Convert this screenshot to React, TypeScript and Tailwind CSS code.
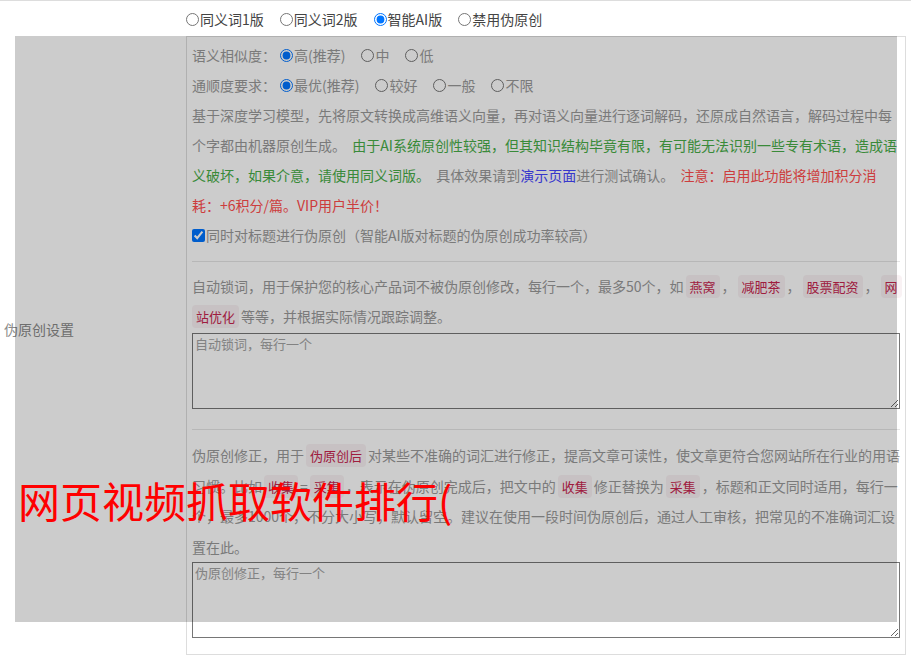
import React from "react";

const Tag = ({ children, first }: { children: React.ReactNode; first?: boolean }) => (
  <span
    className={
      first
        ? "mr-[2px] rounded-[4px] bg-[#f9f2f4] px-[4px] py-[2px] text-[13px] leading-none text-[#c7254e]"
        : "mx-[2px] rounded-[4px] bg-[#f9f2f4] px-[4px] py-[2px] text-[13px] leading-none text-[#c7254e]"
    }
  >
    {children}
  </span>
);

const Radio = ({ checked, label, name }: { checked?: boolean; label: string; name: string }) => (
  <label className="mr-[16px] inline-flex items-center">
    <input type="radio" name={name} defaultChecked={checked} className="m-0 mr-[1px] h-[13px] w-[13px]" />
    <span>{label}</span>
  </label>
);

export default function App() {
  return (
    <div
      className="relative h-[658px] w-[911px] overflow-hidden bg-white text-[14px]"
      style={{ fontFamily: '"Noto Sans CJK SC", "Noto Sans", sans-serif' }}
    >
      <div className="border-t border-[#dddddd]">
        {/* row 1 */}
        <div className="flex h-[35px]">
          <div className="w-[186px]" />
          <div className="flex items-center pt-[1px] text-[#444]">
            <Radio name="ver" label="同义词1版" />
            <Radio name="ver" label="同义词2版" />
            <Radio name="ver" label="智能AI版" checked />
            <Radio name="ver" label="禁用伪原创" />
          </div>
        </div>
        {/* row 2 */}
        <div className="flex">
          <div className="w-[186px] pl-[4px] pt-[283px] leading-[20px] text-[#8a8a8a]">伪原创设置</div>
          <div className="w-[720px] border border-[#dddddd] px-[5px] pb-[16px] pt-[3px] text-[#999]">
            <div className="flex h-[30px] items-center">
              <span className="mr-[4px]">语义相似度：</span>
              <Radio name="sim" label="高(推荐)" checked />
              <Radio name="sim" label="中" />
              <Radio name="sim" label="低" />
            </div>
            <div className="flex h-[30px] items-center">
              <span className="mr-[4px]">通顺度要求：</span>
              <Radio name="flu" label="最优(推荐)" checked />
              <Radio name="flu" label="较好" />
              <Radio name="flu" label="一般" />
              <Radio name="flu" label="不限" />
            </div>
            <p className="whitespace-nowrap leading-[30px]">
              基于深度学习模型，先将原文转换成高维语义向量，再对语义向量进行逐词解码，还原成自然语言，解码过程中每
              <br />
              个字都由机器原创生成。&nbsp;&nbsp;
              <span className="text-[#48ad48]">由于AI系统原创性较强，但其知识结构毕竟有限，有可能无法识别一些专有术语，造成语</span>
              <br />
              <span className="text-[#48ad48]">义破坏，如果介意，请使用同义词版。</span>&nbsp;&nbsp;具体效果请到
              <span className="text-[#4545ff]">演示页面</span>进行测试确认。&nbsp;&nbsp;
              <span className="text-[#ff4d4d]">注意：启用此功能将增加积分消</span>
              <br />
              <span className="text-[#ff4d4d]">耗：+6积分/篇。VIP用户半价！</span>
            </p>
            <label className="flex h-[30px] items-center">
              <input type="checkbox" defaultChecked className="m-0 mr-px h-[13px] w-[13px]" />
              <span>同时对标题进行伪原创（智能AI版对标题的伪原创成功率较高）</span>
            </label>
            <div className="mb-[9px] mt-[11px] h-px bg-[#e5e5e5]" />
            <p className="whitespace-nowrap leading-[30px]">
              自动锁词，用于保护您的核心产品词不被伪原创修改，每行一个，最多50个，如<Tag>燕窝</Tag>，<Tag>减肥茶</Tag>，
              <Tag>股票配资</Tag>，<Tag>网</Tag>
              <br />
              <Tag first>站优化</Tag>等等，并根据实际情况跟踪调整。
            </p>
            <textarea
              placeholder="自动锁词，每行一个"
              className="mt-[2px] block h-[76px] w-[708px] border border-[#767676] bg-white px-[2px] py-[1px] text-[13px] leading-[18px] placeholder:text-[#a3a3a3]"
            />
            <div className="mb-[10px] mt-[20px] h-px bg-[#e5e5e5]" />
            <p className="whitespace-nowrap leading-[30.5px]">
              伪原创修正，用于<Tag>伪原创后</Tag>对某些不准确的词汇进行修正，提高文章可读性，使文章更符合您网站所在行业的用语
              <br />
              习惯。比如<Tag>收集</Tag>=<Tag>采集</Tag>，表示在伪原创完成后，把文中的<Tag>收集</Tag>修正替换为<Tag>采集</Tag>，标题和正文同时适用，每行一
              <br />
              个，最多1000个，不分大小写，默认留空。建议在使用一段时间伪原创后，通过人工审核，把常见的不准确词汇设
              <br />
              置在此。
            </p>
            <textarea
              placeholder="伪原创修正，每行一个"
              className="block h-[76px] w-[708px] border border-[#767676] bg-white px-[2px] py-[1px] text-[13px] leading-[18px] placeholder:text-[#a3a3a3]"
            />
          </div>
        </div>
      </div>

      {/* grey overlay */}
      <div className="pointer-events-none absolute left-[15px] top-[36px] h-[586px] w-[882px] bg-black/20" />

      {/* red overlay text */}
      <div className="pointer-events-none absolute left-[18px] top-[479px] whitespace-nowrap text-[42px] leading-none text-[#ff0000]">
        网页视频抓取软件排行(
      </div>
    </div>
  );
}
